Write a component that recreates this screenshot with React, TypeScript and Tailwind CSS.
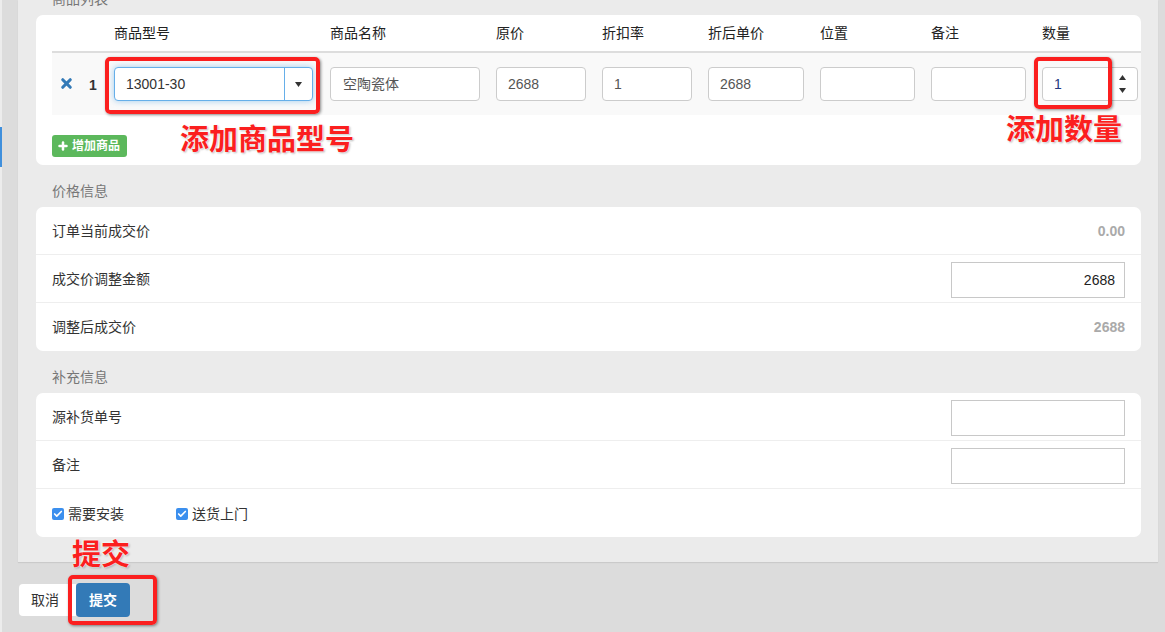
import { Check, Plus, X } from 'lucide-react';

const FONT = "font-['Liberation_Sans','Noto_Sans_CJK_SC',sans-serif]";

const COLUMNS = ['商品型号', '商品名称', '原价', '折扣率', '折后单价', '位置', '备注', '数量'];

const cellInput =
  'flex h-[34px] items-center rounded border border-[#ccc] bg-white px-[11px] text-sm text-[#555]';

function Triangle({ down, className }: { down?: boolean; className: string }) {
  return (
    <svg viewBox="0 0 7 5" className={className} fill="currentColor">
      <polygon points={down ? '0,0 7,0 3.5,5' : '3.5,0 7,5 0,5'} />
    </svg>
  );
}

function RedBox({ className }: { className: string }) {
  return (
    <div
      className={`pointer-events-none absolute rounded-[5px] border-[4px] border-[#fb1f1f] shadow-[1px_1px_3px_rgba(0,0,0,0.45)] ${className}`}
    />
  );
}

function RedLabel({ className, children }: { className: string; children: string }) {
  return (
    <div
      className={`absolute text-[29px] leading-[30px] font-bold whitespace-nowrap text-[#fb1f1f] [text-shadow:0_0_2px_#fff,0_0_2px_#fff,1px_1px_2px_rgba(0,0,0,0.35)] ${className}`}
    >
      {children}
    </div>
  );
}

function SectionTitle({ children }: { children: string }) {
  return <div className="flex h-[42px] shrink-0 items-end pb-[9px] pl-4 text-sm leading-none text-[#777]">{children}</div>;
}

function InfoRow({ label, children, last }: { label: string; children?: React.ReactNode; last?: boolean }) {
  return (
    <div className={`flex h-12 items-center justify-between px-4 ${last ? '' : 'border-b border-[#eee]'}`}>
      <span className="text-sm text-[#333]">{label}</span>
      {children}
    </div>
  );
}

function BoxInput({ value }: { value?: string }) {
  return (
    <div className="mt-[2px] flex h-9 w-[174px] items-center justify-end border border-[#c8c8c8] bg-white px-[9px] text-sm text-[#222]">
      {value}
    </div>
  );
}

function CheckItem({ label, className }: { label: string; className: string }) {
  return (
    <div className={`flex items-center gap-1 text-sm text-[#333] ${className}`}>
      <span className="flex size-3 items-center justify-center rounded-[2px] bg-[#3b8fee]">
        <Check className="size-2.5 text-white" strokeWidth={4} />
      </span>
      {label}
    </div>
  );
}

export default function App() {
  return (
    <div className={`relative h-[632px] w-[1165px] overflow-hidden bg-[#dcdcdc] ${FONT}`}>
      <div className="absolute top-0 left-0 h-full w-0.5 bg-[#ececec]" />
      <div className="absolute top-[127px] left-0 h-10 w-0.5 bg-[#3f8fdc]" />

      <div className="ml-[18px] flex h-[562px] w-[1140px] flex-col bg-[#ebebeb] pr-[17px] pl-[18px] shadow-[0_1px_1px_rgba(0,0,0,0.08)]">
        <div className="-mt-[27px]">
          <SectionTitle>商品列表</SectionTitle>
        </div>

        <div className="h-[150px] shrink-0 rounded-[7px] bg-white pl-4">
          <div className="grid h-[38px] grid-cols-[200px_150px_90px_90px_96px_95px_95px_96px] items-center gap-x-4 border-b-2 border-[#ddd] pl-[62px] text-sm text-[#222]">
            {COLUMNS.map((col) => (
              <span key={col}>{col}</span>
            ))}
          </div>

          <div className="relative grid h-[62px] grid-cols-[200px_150px_90px_90px_96px_95px_95px_96px] items-center gap-x-4 bg-[#f9f9f9] pl-[62px]">
            <X className="absolute top-[23px] left-[7px] size-[15px] text-[#337ab7]" strokeWidth={5} />
            <span className="absolute top-[22px] left-[37px] text-sm font-bold text-[#333]">1</span>

            <div className="flex h-[34px] w-[199px] items-center rounded border border-[#66afe9] bg-white text-sm text-[#333] shadow-[0_0_6px_rgba(102,175,233,0.6)]">
              <span className="flex-1 pl-[11px]">13001-30</span>
              <span className="flex h-full w-[28px] items-center justify-center border-l border-[#66afe9] text-[#333]">
                <Triangle down className="h-[5px] w-[7px]" />
              </span>
            </div>
            <div className={`${cellInput} !px-3`}>空陶瓷体</div>
            <div className={cellInput}>2688</div>
            <div className={cellInput}>1</div>
            <div className={cellInput}>2688</div>
            <div className={cellInput} />
            <div className={cellInput} />
            <div className={`${cellInput} justify-between !pr-0 !text-[#24397f]`}>
              <span>1</span>
              <span className="mr-[11px] flex flex-col items-center gap-[8px] text-[#333]">
                <Triangle className="h-[5px] w-[7px]" />
                <Triangle down className="h-[5px] w-[7px]" />
              </span>
            </div>
          </div>

          <div className="mt-5 flex h-[22px] w-[75px] items-center gap-[3px] rounded-[3px] bg-[#5cb85c] pl-[5px] text-xs font-bold text-white">
            <Plus className="size-3" strokeWidth={5} />
            增加商品
          </div>
        </div>

        <SectionTitle>价格信息</SectionTitle>
        <div className="shrink-0 rounded-[7px] bg-white">
          <InfoRow label="订单当前成交价">
            <span className="text-sm font-bold text-[#aaa]">0.00</span>
          </InfoRow>
          <InfoRow label="成交价调整金额">
            <BoxInput value="2688" />
          </InfoRow>
          <InfoRow label="调整后成交价" last>
            <span className="text-sm font-bold text-[#aaa]">2688</span>
          </InfoRow>
        </div>

        <SectionTitle>补充信息</SectionTitle>
        <div className="shrink-0 rounded-[7px] bg-white">
          <InfoRow label="源补货单号">
            <BoxInput />
          </InfoRow>
          <InfoRow label="备注">
            <BoxInput />
          </InfoRow>
          <div className="flex h-12 items-center pt-0.5 pl-4">
            <CheckItem label="需要安装" className="w-[124px]" />
            <CheckItem label="送货上门" className="" />
          </div>
        </div>
      </div>

      <div className="mt-[21px] ml-[19px] flex items-center">
        <div className="flex h-8 w-[57px] items-center rounded-l bg-white pl-3 text-sm text-[#333]">取消</div>
        <div className="flex h-[34px] w-[54px] items-center justify-center rounded bg-[#337ab7] text-sm font-bold text-white">提交</div>
      </div>

      <RedBox className="top-[57px] left-[105px] h-[57px] w-[215px]" />
      <RedBox className="top-[57px] left-[1034px] h-[52px] w-[78px]" />
      <RedBox className="top-[575px] left-[68px] h-[50px] w-[89px]" />
      <RedLabel className="top-[125px] left-[180px]">添加商品型号</RedLabel>
      <RedLabel className="top-[115px] left-[1006px]">添加数量</RedLabel>
      <RedLabel className="top-[540px] left-[72px]">提交</RedLabel>
    </div>
  );
}
